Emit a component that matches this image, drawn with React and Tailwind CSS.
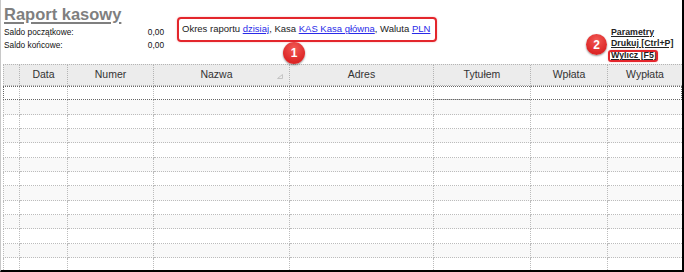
import React from "react";

const cols = "grid-cols-[17px_48px_86px_136px_144px_97px_77px_74px]";
const heads = ["", "Data", "Numer", "Nazwa", "Adres", "Tytułem", "Wpłata", "Wypłata"];
const rowHeights = [14, 15, 14, 14, 15, 14, 14, 15, 14, 14, 15, 14, 14];

function Badge({ n, className }) {
  return (
    <div
      className={`absolute flex items-center justify-center rounded-full bg-[radial-gradient(circle_at_50%_30%,#f25a55,#dc2626_70%)] text-white font-bold text-[12px] shadow-[0_1px_2px_rgba(0,0,0,0.45)] ${className}`}
      style={{ fontFamily: '"Liberation Sans", Arial, sans-serif' }}
    >
      {n}
    </div>
  );
}

export default function App() {
  const link = "text-[#2a2ae8] underline decoration-[#2a2ae8]";
  return (
    <div
      className="relative w-[684px] h-[272px] overflow-hidden bg-white border-l border-l-[#c8c8c8] border-r-2 border-b-2 border-r-black border-b-black"
      style={{ fontFamily: '"Liberation Sans", Arial, sans-serif' }}
    >
      {/* top area */}
      <div className="flex h-[64px]">
        <div className="w-[163px] pl-[3px] pt-[4px] shrink-0">
          <div className="h-[22px] leading-[20px] text-[16.5px] font-bold text-[#7f7f7f] underline decoration-[1.5px] underline-offset-[2px]">
            Raport kasowy
          </div>
          <div className="flex justify-between h-[13px] leading-[13px] text-[8.3px] text-[#111]">
            <span>Saldo początkowe:</span>
            <span>0,00</span>
          </div>
          <div className="flex justify-between h-[13px] leading-[13px] text-[8.3px] text-[#111]">
            <span>Saldo końcowe:</span>
            <span>0,00</span>
          </div>
        </div>
        <div className="ml-[13px] mt-[17px] w-[260px] h-[25px] shrink-0 flex items-center pl-[3px] border-2 border-[#e3262c] rounded-[4px] shadow-[0_0_2px_rgba(227,38,44,0.35)] text-[9.5px] text-[#222] whitespace-nowrap">
          <span>
            Okres raportu <span className={link}>dzisiaj</span>, Kasa{" "}
            <span className={link}>KAS Kasa główna</span>, Waluta{" "}
            <span className={link}>PLN</span>
          </span>
        </div>
        <div className="ml-auto w-[71px] pt-[26.5px] text-[8.8px] font-bold text-[#222] leading-[11.7px] whitespace-nowrap">
          <div className="underline">Parametry</div>
          <div className="underline">Drukuj [Ctrl+P]</div>
          <div className="underline">Wylicz [F5]</div>
        </div>
      </div>

      {/* annotations */}
      <div className="absolute left-[607px] top-[50px] w-[50px] h-[12px] border-2 border-[#e3262c] rounded-[3px] shadow-[0_0_2px_rgba(227,38,44,0.35)]" />
      <Badge n="1" className="left-[282px] top-[42px] w-[22px] h-[22px]" />
      <Badge n="2" className="left-[585px] top-[34px] w-[21px] h-[21px]" />

      {/* grid */}
      <div className="pl-[2px]">
        <div className={`grid ${cols} h-[22px] bg-[#ececec] border-t border-dotted border-[#b4b4b4]`}>
          {heads.map((h, i) => (
            <div
              key={i}
              className={`relative flex items-center justify-center border-dotted border-[#b4b4b4] border-b ${i < 7 ? "border-r" : ""} ${i === 0 ? "border-l" : ""} ${i === 3 ? "pr-[10px]" : ""} text-[10.5px] text-[#333]`}
            >
              {h}
              {i === 3 && (
                <svg className="absolute right-[6px] top-[9px]" width="6" height="5" viewBox="0 0 6 5">
                  <path d="M5.5 0.5 L5.5 4.5 L0.5 4.5 Z" fill="none" stroke="#c4c4c4" strokeWidth="1" />
                </svg>
              )}
            </div>
          ))}
        </div>
        {rowHeights.map((rh, r) => (
          <div
            key={r}
            className={`grid ${cols} ${r % 2 === 1 ? "bg-[#f9f9f9]" : "bg-white"} ${r === 0 ? "outline outline-1 outline-dotted outline-[#666] -outline-offset-1" : ""}`}
            style={{ height: rh }}
          >
            {heads.map((_, i) => (
              <div
                key={i}
                className={`border-dotted border-[#bcbcbc] border-b ${i < 7 ? "border-r" : ""} ${i === 0 ? "border-l" : ""}`}
              />
            ))}
          </div>
        ))}
      </div>
    </div>
  );
}
